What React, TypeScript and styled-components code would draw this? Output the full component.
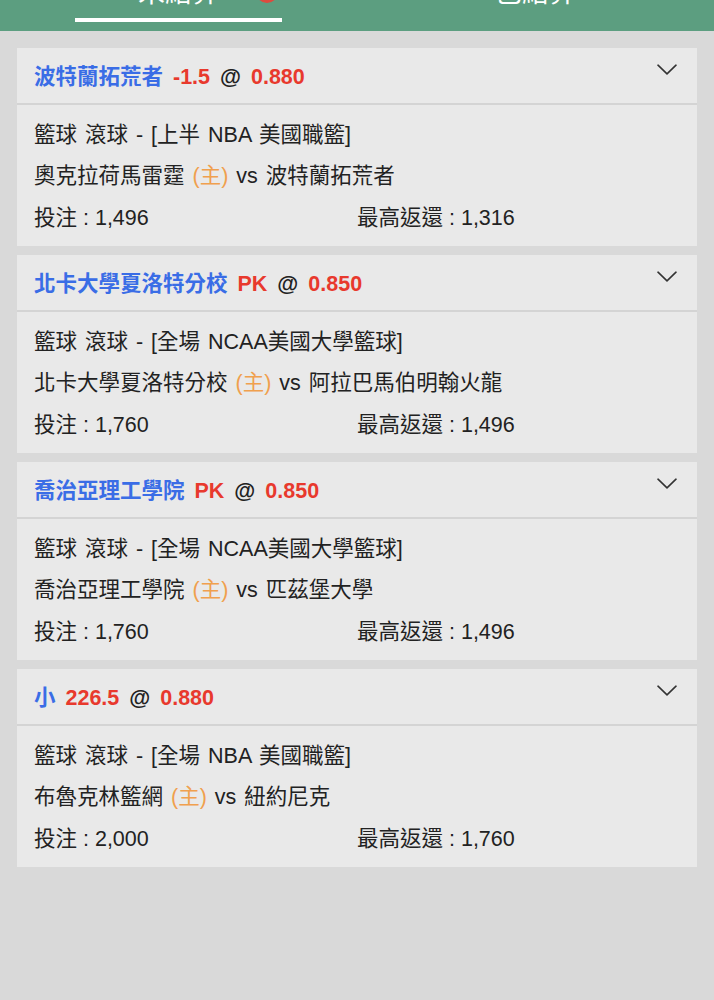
import React from "react";
import styled, { createGlobalStyle } from "styled-components";

const GlobalStyle = createGlobalStyle`
  html, body {
    margin: 0;
    padding: 0;
    background: #d9d9d9;
  }
  body {
    font-family: "Liberation Sans", Arial, "Noto Sans CJK TC", sans-serif;
    min-height: 1000px;
  }
`;

const Page = styled.div`
  min-height: 1000px;
  background: #d9d9d9;
`;

const TabBar = styled.div`
  height: 31px;
  background: #5c9e80;
  overflow: hidden;
  display: grid;
  grid-template-columns: 1fr 1fr;
`;

const Tab = styled.div`
  position: relative;
  display: flex;
  flex-direction: column;
  align-items: center;
  margin-top: -22px;
`;

const TabLabel = styled.div`
  font-size: 27px;
  line-height: 30px;
  color: #ffffff;
  font-family: "Liberation Sans", "Noto Sans CJK TC", sans-serif;
`;

const TabUnderline = styled.div<{ $active?: boolean }>`
  margin-top: 10px;
  width: 207px;
  height: 4px;
  background: ${(p) => (p.$active ? "#ffffff" : "transparent")};
`;

const Badge = styled.span`
  position: absolute;
  left: 256px;
  top: 3px;
  width: 22px;
  height: 22px;
  border-radius: 50%;
  background: #dd4b3e;
`;

const List = styled.div`
  display: flex;
  flex-direction: column;
  gap: 9px;
  padding: 17px;
`;

const Card = styled.div`
  background: #e9e9e9;
  display: flex;
  flex-direction: column;
`;

const CardHeader = styled.div`
  box-sizing: border-box;
  height: 57px;
  display: flex;
  align-items: center;
  justify-content: space-between;
  padding: 0 20px 3px 17px;
  border-bottom: 2px solid #d4d4d4;
`;

const Title = styled.div`
  font-size: 21.5px;
  font-weight: 700;
  color: #222;
  white-space: nowrap;
  word-spacing: 4px;
`;

const Blue = styled.span`
  color: #3a6de6;
`;

const Red = styled.span`
  color: #e8392d;
`;

const Chevron = styled.svg`
  align-self: flex-start;
  margin-top: 16px;
  width: 20px;
  height: 11px;
`;

const CardBody = styled.div`
  padding: 9.5px 17px 7px;
  display: grid;
  grid-template-columns: 1fr 1fr;
  font-size: 21.5px;
  line-height: 41.5px;
  color: #222;
  word-spacing: 2px;
`;

const FullLine = styled.div`
  grid-column: 1 / -1;
  white-space: nowrap;
`;

const Cell = styled.div`
  white-space: nowrap;
  word-spacing: 0;
`;

const Home = styled.span`
  color: #f0a04e;
`;

type Bet = {
  pick: string;
  line: string;
  odds: string;
  league: string;
  home: string;
  away: string;
  stake: string;
  ret: string;
};

const bets: Bet[] = [
  {
    pick: "波特蘭拓荒者",
    line: "-1.5",
    odds: "0.880",
    league: "籃球 滾球 - [上半 NBA 美國職籃]",
    home: "奧克拉荷馬雷霆",
    away: "波特蘭拓荒者",
    stake: "1,496",
    ret: "1,316",
  },
  {
    pick: "北卡大學夏洛特分校",
    line: "PK",
    odds: "0.850",
    league: "籃球 滾球 - [全場 NCAA美國大學籃球]",
    home: "北卡大學夏洛特分校",
    away: "阿拉巴馬伯明翰火龍",
    stake: "1,760",
    ret: "1,496",
  },
  {
    pick: "喬治亞理工學院",
    line: "PK",
    odds: "0.850",
    league: "籃球 滾球 - [全場 NCAA美國大學籃球]",
    home: "喬治亞理工學院",
    away: "匹茲堡大學",
    stake: "1,760",
    ret: "1,496",
  },
  {
    pick: "小",
    line: "226.5",
    odds: "0.880",
    league: "籃球 滾球 - [全場 NBA 美國職籃]",
    home: "布魯克林籃網",
    away: "紐約尼克",
    stake: "2,000",
    ret: "1,760",
  },
];

function ChevronDown() {
  return (
    <Chevron viewBox="0 0 20 11" fill="none">
      <path d="M1 1.2 L10 9.8 L19 1.2" stroke="#333" strokeWidth="1.6" strokeLinecap="round" strokeLinejoin="round" />
    </Chevron>
  );
}

export default function App() {
  return (
    <Page>
      <GlobalStyle />
      <TabBar>
        <Tab>
          <TabLabel>未結算</TabLabel>
          <TabUnderline $active />
          <Badge />
        </Tab>
        <Tab>
          <TabLabel>已結算</TabLabel>
          <TabUnderline />
        </Tab>
      </TabBar>
      <List>
        {bets.map((b, i) => (
          <Card key={i}>
            <CardHeader>
              <Title>
                <Blue>{b.pick}</Blue> <Red>{b.line}</Red> @ <Red>{b.odds}</Red>
              </Title>
              <ChevronDown />
            </CardHeader>
            <CardBody>
              <FullLine>{b.league}</FullLine>
              <FullLine>
                {b.home} <Home>(主)</Home> vs {b.away}
              </FullLine>
              <Cell>投注 : {b.stake}</Cell>
              <Cell>最高返還 : {b.ret}</Cell>
            </CardBody>
          </Card>
        ))}
      </List>
    </Page>
  );
}
